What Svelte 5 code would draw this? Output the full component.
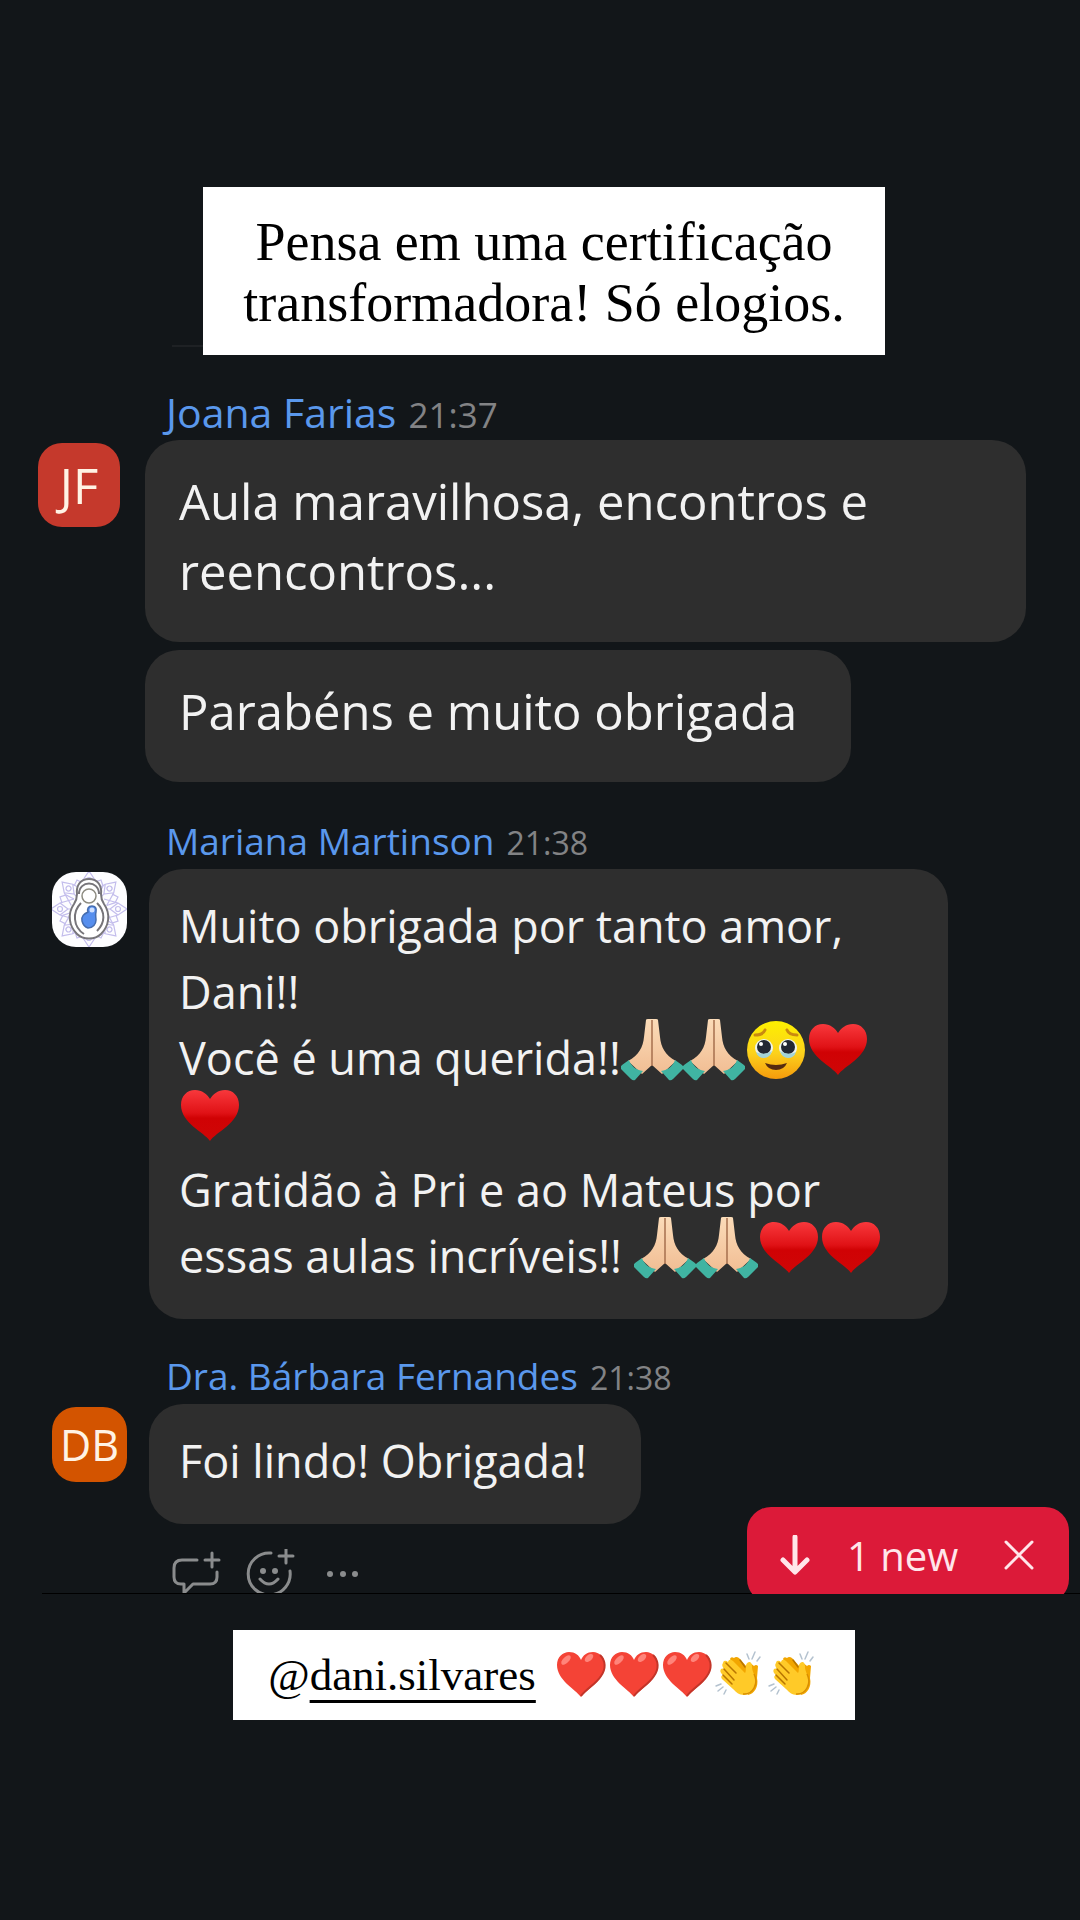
<script>
	const groups = [
		{
			author: 'Joana Farias',
			time: '21:37',
			initials: 'JF',
			color: '#c5392c',
			size: 'large',
			bubbles: [
				{ wide: true, lines: [['Aula maravilhosa, encontros e'], ['reencontros...']] },
				{ lines: [['Parabéns e muito obrigada']] }
			]
		},
		{
			author: 'Mariana Martinson',
			time: '21:38',
			bubbles: [
				{
					wide: true,
					lines: [
						['Muito obrigada por tanto amor,'],
						['Dani!!'],
						['Você é uma querida!!', 'hands', 'hands', 'face', 'heart'],
						['', 'heart'],
						['Gratidão à Pri e ao Mateus por'],
						['essas aulas incríveis!! ', 'hands', 'hands', 'heart', 'heart']
					]
				}
			]
		},
		{
			author: 'Dra. Bárbara Fernandes',
			time: '21:38',
			initials: 'DB',
			color: '#d35400',
			bubbles: [{ lines: [['Foi lindo! Obrigada!']] }]
		}
	];

	const labels = { hands: '🙏🏻', face: '🥹', heart: '❤️' };
	const petals = [0, 45, 90, 135, 180, 225, 270, 315];
</script>

<svelte:head>
	<title>Chat</title>
</svelte:head>

<svg class="defs" aria-hidden="true">
	<defs>
		<linearGradient id="heartFill" x1="0" y1="0" x2="0" y2="1">
			<stop offset="0" stop-color="#f8383c" />
			<stop offset=".45" stop-color="#e01216" />
			<stop offset=".55" stop-color="#d00204" />
			<stop offset="1" stop-color="#cf0606" />
		</linearGradient>
		<linearGradient id="faceFill" x1="0" y1="0" x2="0" y2="1">
			<stop offset="0" stop-color="#fdf000" />
			<stop offset=".55" stop-color="#fcd21c" />
			<stop offset="1" stop-color="#f59a0c" />
		</linearGradient>
		<linearGradient id="skinFill" x1="0" y1="0" x2="0" y2="1">
			<stop offset="0" stop-color="#fbdcb9" />
			<stop offset="1" stop-color="#f1bd93" />
		</linearGradient>
	</defs>
</svg>

{#snippet emoji(name)}
	<svg class="emoji" viewBox="0 0 62 62" role="img" aria-label={labels[name]}>
		{#if name === 'heart'}
			<path
				fill="url(#heartFill)"
				d="M31 56C25 47 2 38 2 20 2 11 8 5 16 5c7 0 12 4 15 9 3-5 8-9 15-9 8 0 14 6 14 15 0 18-23 27-29 36z"
			/>
		{:else if name === 'face'}
			<circle cx="31" cy="31" r="29" fill="url(#faceFill)" />
			<path d="M10 16q8 0 10-5M52 16q-8 0-10-5" fill="none" stroke="#c98a10" stroke-width="3" stroke-linecap="round" />
			<circle cx="19" cy="29" r="9" fill="#eef4ee" />
			<circle cx="43" cy="29" r="9" fill="#eef4ee" />
			<circle cx="19" cy="28" r="7" fill="#222833" />
			<circle cx="43" cy="28" r="7" fill="#222833" />
			<circle cx="16" cy="25" r="2" fill="#fff" />
			<circle cx="40" cy="25" r="2" fill="#fff" />
			<path d="M11 33q8 4 16-1-2 7-8 7-6 0-8-6zM35 32q8 5 16 1-2 6-8 6-6 0-8-7z" fill="#a3d3d6" />
			<path d="M20 44q11 4 22 0-3 7-11 7t-11-7z" fill="#552b10" />
		{:else}
			<path d="M25 1q0-1 2-1h4v46l-10 9L7 42c11-6 15-14 16-24z" fill="url(#skinFill)" />
			<path d="M37 1q0-1-2-1h-4v46l10 9 14-13c-11-6-15-14-16-24z" fill="url(#skinFill)" />
			<path d="M31 1v46" stroke="#a66f4e" stroke-width="1.5" />
			<path
				d="M1 46l7-5c2 6 7 10 14 11l-8 9q-2 1-4-1L0 50q-1-2 1-4zM61 46l-7-5c-2 6-7 10-14 11l8 9q2 1 4-1l10-10q1-2-1-4z"
				fill="#40b4a2"
			/>
		{/if}
	</svg>
{/snippet}

{#snippet softHeart()}
	<svg class="reaction" viewBox="0 0 53 50" role="img" aria-label="❤️">
		<path fill="#f44336" d="M26 47C20 39 2 30 2 15 2 7 8 2 14 2c6 0 10 3 12 8 2-5 6-8 12-8 6 0 12 5 12 13 0 15-18 24-24 32z" />
		<path fill="none" stroke="#c33529" stroke-width="2" d="M45 5c6 6 6 14 1 21-5 8-15 13-20 20" />
		<ellipse cx="11" cy="10" rx="6" ry="3" fill="#ff847a" transform="rotate(-45 11 10)" />
		<ellipse cx="34" cy="8" rx="5" ry="3" fill="#ff847a" transform="rotate(-40 34 8)" />
	</svg>
{/snippet}

{#snippet clap()}
	<svg class="reaction" viewBox="-2 -2 53 50" role="img" aria-label="👏">
		<path
			fill="#f2a600"
			d="M14 7q1-3 4-1 2-2 5 0l8 9 2-5 5 4q2-2 4 0l-1 12c2 9-3 16-9 17z"
		/>
		<path
			fill="#ffca28"
			d="M8 9q2-1 4 1 1-4 5-1l12 12q1-1 1-8 1-3 4-3 2 1 2 5c0 5 4 8 3 16 0 7-5 12-11 12-5 0-8-3-11-6L6 27q-2-3 1-4-4-3-2-6 1-1 3 0-3-4-1-6 0-1 1-2z"
		/>
		<path
			d="M10 11l10 10M8 17l10 11M7 23l9 9M24 8l5 7"
			fill="none"
			stroke="#b87500"
			stroke-width="1.5"
			stroke-linecap="round"
		/>
		<path d="M38 22c5 9-1 21-11 20" fill="none" stroke="#d98e00" stroke-width="1.5" />
		<path
			d="M33 7l-2-5M36 7l3-7M41 9l3-4M5 32l-5 2M7 35l-5 4M10 38l-2 4"
			fill="none"
			stroke="#b4c2cf"
			stroke-width="1.5"
			stroke-linecap="round"
		/>
	</svg>
{/snippet}

<main>
	<div class="caption-row">
		<h1 class="caption">
			Pensa em uma certificação<br />
			transformadora! Só elogios.
		</h1>
	</div>
	<hr />

	<section class="chat">
		{#each groups as group}
			<article class="group {group.size}">
				<header>
					<span class="author">{group.author}</span>
					<time>{group.time}</time>
				</header>
				<div class="body">
					{#if group.initials}
						<div class="avatar" style="background: {group.color}">{group.initials}</div>
					{:else}
						<svg class="avatar" viewBox="0 0 75 75" role="img" aria-label={group.author}>
							<rect width="75" height="75" fill="#fdfdff" />
							<g fill="none" stroke="#c3bdec" stroke-width="1.2">
								{#each petals as angle}
									<g transform="rotate({angle} 37 37)">
										<path d="M27 22L31 8 37-1 43 8 47 22M31 8l6 8 6-8M37 16v8" />
										<circle cx="37" cy="8" r="2.5" />
										<path d="M47 22l4-8-2-6-6 2" />
									</g>
								{/each}
							</g>
							<path
								d="M37 7c-9 0-13 7-12 15 0 5-1 7-3 10-7 10-5 22 3 30 6 6 18 6 24 0 8-8 10-20 3-30-2-3-3-5-3-10 1-8-3-15-12-15z"
								fill="#fff"
								stroke="#77757a"
								stroke-width="2"
							/>
							<path
								d="M29 31c-9 9-8 24 3 31M45 31c9 9 8 20 0 28M27 22c0-14 20-14 20 0"
								fill="none"
								stroke="#77757a"
								stroke-width="2"
							/>
							<circle cx="37" cy="24" r="7" fill="#fff" stroke="#8d8b80" stroke-width="1.5" />
							<path
								d="M40 34c-4 0-5 3-4 6-4 2-7 4-6 9 1 4 3 6 6 7 5 0 8-4 8-8 0-3-1-5 0-8 1-4-1-6-4-6z"
								fill="#568eee"
								stroke="#456cae"
								stroke-width="1.5"
							/>
							<circle cx="40" cy="38" r="2.5" fill="#cfe0ff" />
						</svg>
					{/if}
					<div class="bubbles">
						{#each group.bubbles as bubble}
							<div class="bubble" class:wide={bubble.wide}>
								{#each bubble.lines as [text, ...icons]}
									<div class="line">{text}{#each icons as icon}{@render emoji(icon)}{/each}</div>
								{/each}
							</div>
						{/each}
					</div>
				</div>
			</article>
		{/each}

		<div class="actions">
			<button aria-label="Reply">
				<svg viewBox="0 0 50 50">
					<path d="M26 11H11q-8 0-8 8v9q0 7 7 7h3v9l9-9h17q7 0 7-7v-5M41 4v14M34 11h14" />
				</svg>
			</button>
			<button aria-label="Add reaction">
				<svg viewBox="0 0 50 50">
					<path d="M25 4A21 21 0 1 0 44 22M40 0v14M33 7h14M14 30q9 10 18 0" />
					<circle cx="17" cy="22" r="3" />
					<circle cx="29" cy="22" r="3" />
				</svg>
			</button>
			<button aria-label="More">
				<svg viewBox="0 0 50 50">
					<circle cx="9" cy="25" r="3" />
					<circle cx="22" cy="25" r="3" />
					<circle cx="34" cy="25" r="3" />
				</svg>
			</button>
		</div>

		<div class="toast">
			<button class="jump">
				<svg viewBox="0 0 40 40">
					<path d="M20 2v34M8 25l12 12 12-12" stroke-width="5" />
				</svg>
				1 new
			</button>
			<button aria-label="Close">
				<svg viewBox="0 0 40 40">
					<path d="M7 7l26 26M33 7L7 33" stroke-width="3" />
				</svg>
			</button>
		</div>
	</section>

	<div class="caption-row">
		<div class="mention">
			<span>@<a href="#dani.silvares">dani.silvares</a></span>
			<div class="reactions">
				{@render softHeart()}{@render softHeart()}{@render softHeart()}{@render clap()}{@render clap()}
			</div>
		</div>
	</div>
</main>

<style>
	:global(body) {
		margin: 0;
		background: #121619;
	}

	.defs {
		position: absolute;
		width: 0;
		height: 0;
	}

	main {
		padding: 187px 0 200px;
		font-family: 'Open Sans', 'Noto Sans', sans-serif;
	}

	.caption-row {
		position: relative;
		display: flex;
		justify-content: center;
		padding-left: 8px;
	}

	.caption,
	.mention {
		background: #fff;
		color: #000;
		font-family: 'Liberation Serif', serif;
	}

	.caption {
		margin: 0;
		padding: 25px 40px 21px;
		font-size: 54px;
		font-weight: 400;
		line-height: 61px;
		text-align: center;
	}

	/* mostly hidden behind the caption */
	hr {
		width: 50%;
		height: 2px;
		margin: -10px 0 8px 172px;
		border: 0;
		background: #1e2124;
	}

	.chat {
		position: relative;
		overflow: hidden;
	}

	.group {
		padding-top: 31px;
	}

	.large {
		padding-bottom: 2px;
	}

	header {
		display: flex;
		align-items: baseline;
		gap: 12px;
		height: 54px;
		padding-left: 166px;
		line-height: 52px;
	}

	.author {
		color: #5a98ec;
		font-size: 37px;
	}

	time {
		color: #828385;
		font-size: 32px;
	}

	.body {
		display: flex;
		align-items: flex-start;
		gap: 22px;
		padding: 0 132px 0 52px;
	}

	.avatar {
		flex: none;
		width: 75px;
		height: 75px;
		margin-top: 3px;
		border-radius: 24px;
		color: #fff3e4;
		font-size: 43px;
		line-height: 75px;
		text-align: center;
	}

	.bubbles {
		display: flex;
		flex: 1;
		flex-direction: column;
		align-items: flex-start;
		gap: 8px;
	}

	.bubble {
		padding: 24px 54px 30px 30px;
		border-radius: 34px;
		background: #2e2e2e;
		color: #f2f2f2;
		font-size: 45px;
		line-height: 66px;
	}

	.bubble.wide {
		align-self: stretch;
	}

	.line {
		white-space: pre;
	}

	.emoji {
		width: 62px;
		height: 62px;
		margin: -12px 0 -4px;
		vertical-align: -2px;
	}

	.large .author {
		font-size: 41px;
	}

	.large time {
		font-size: 35px;
	}

	.large .body {
		gap: 25px;
		padding: 0 54px 0 38px;
	}

	.large .avatar {
		width: 82px;
		height: 84px;
		font-size: 49px;
		line-height: 84px;
	}

	.large .bubble {
		padding: 26px 54px 36px 34px;
		font-size: 49px;
		line-height: 70px;
	}

	button {
		display: flex;
		align-items: center;
		padding: 0;
		border: 0;
		background: none;
		color: inherit;
		font: inherit;
		cursor: pointer;
	}

	button path {
		fill: none;
		stroke: currentColor;
		stroke-linecap: round;
		stroke-linejoin: round;
	}

	.actions {
		display: flex;
		align-items: flex-start;
		gap: 25px;
		height: 44px;
		margin-left: 42px;
		padding: 25px 0 0 129px;
		overflow: hidden;
		border-bottom: 1px solid #000;
		color: #8a8c8d;
	}

	.actions svg {
		width: 50px;
		height: 50px;
	}

	.actions path {
		stroke-width: 3;
	}

	.actions circle {
		fill: currentColor;
	}

	.toast {
		position: absolute;
		right: 11px;
		bottom: -9px;
		display: flex;
		align-items: center;
		justify-content: space-between;
		box-sizing: border-box;
		width: 322px;
		height: 96px;
		padding: 0 30px 0 28px;
		border-radius: 24px;
		background: #dc1a39;
		color: #ffe6ea;
		font-size: 40px;
	}

	.toast svg {
		width: 40px;
		height: 40px;
	}

	.jump {
		gap: 32px;
	}

	.mention {
		display: flex;
		align-items: center;
		gap: 19px;
		margin-top: 36px;
		padding: 0 35px;
		font-size: 45px;
		line-height: 90px;
	}

	.mention a {
		color: inherit;
		text-decoration: underline;
		text-decoration-thickness: 3px;
		text-underline-offset: 10px;
	}

	.reactions {
		display: flex;
	}

	.reaction {
		width: 53px;
		height: 50px;
	}
</style>
